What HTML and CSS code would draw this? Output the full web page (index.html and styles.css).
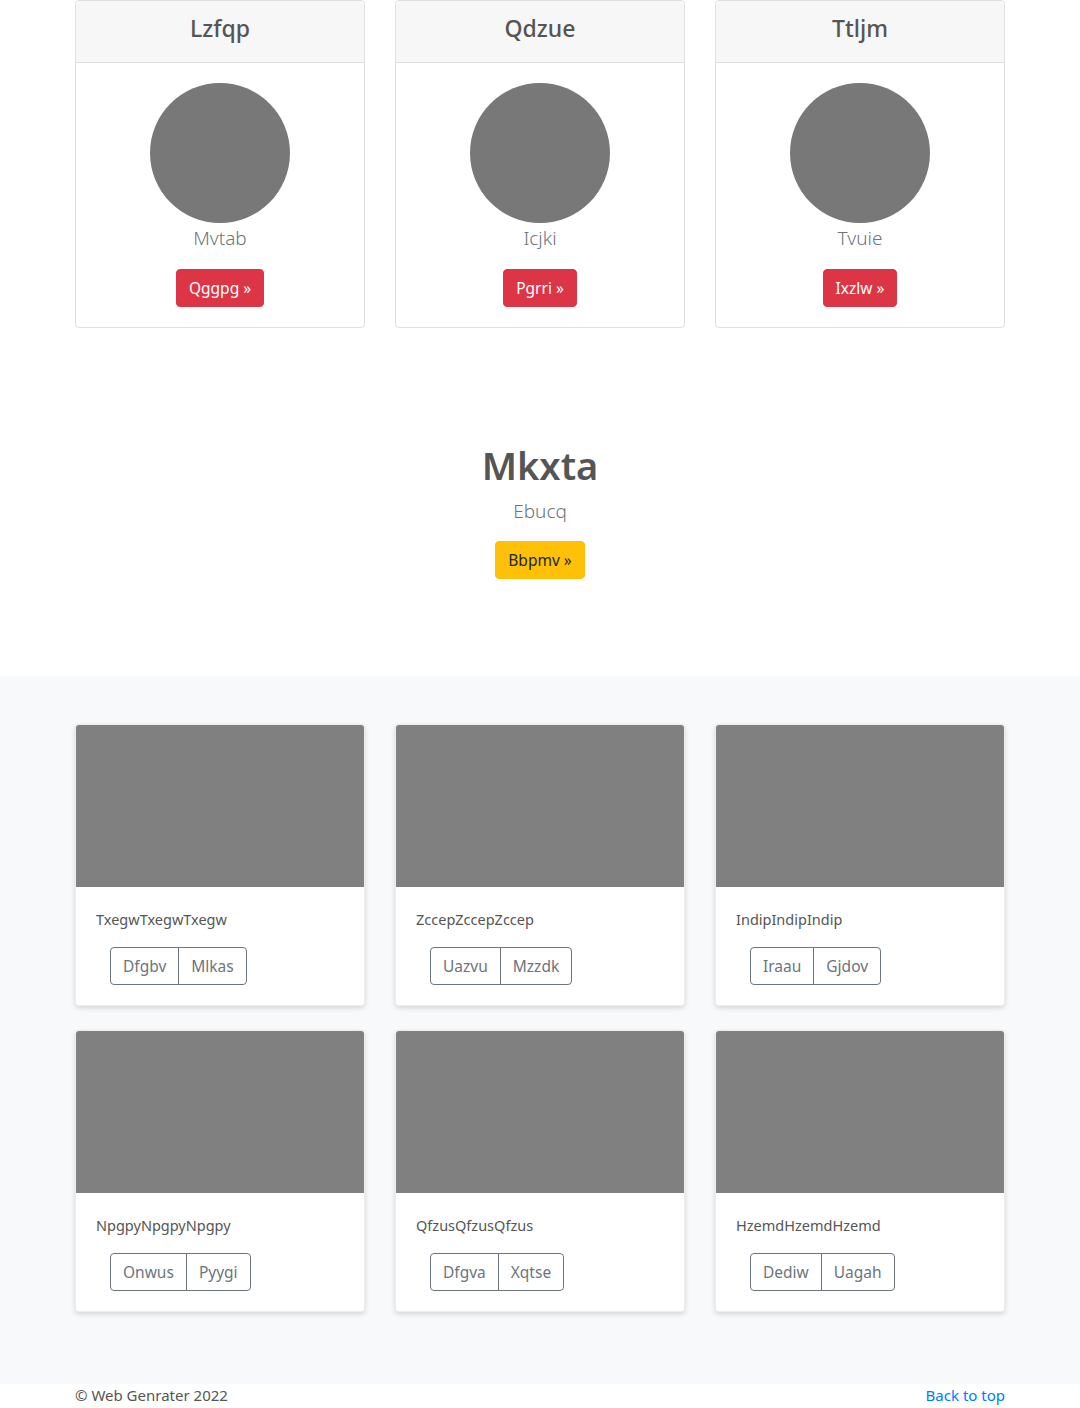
FILE: index.html
```html
<!DOCTYPE html>
<html lang="en">
<head>
<meta charset="utf-8">
<title>Page</title>
<link rel="stylesheet" href="styles.css">
</head>
<body>
<div class="container">
  <div class="pricing">
    <div class="pcard">
      <div class="pcard-header"><h4>Lzfqp</h4></div>
      <div class="pcard-body">
        <div class="avatar"></div>
        <p class="lead">Mvtab</p>
        <a class="btn btn-danger" href="#">Qggpg &raquo;</a>
      </div>
    </div>
    <div class="pcard">
      <div class="pcard-header"><h4>Qdzue</h4></div>
      <div class="pcard-body">
        <div class="avatar"></div>
        <p class="lead">Icjki</p>
        <a class="btn btn-danger" href="#">Pgrri &raquo;</a>
      </div>
    </div>
    <div class="pcard">
      <div class="pcard-header"><h4>Ttljm</h4></div>
      <div class="pcard-body">
        <div class="avatar"></div>
        <p class="lead">Tvuie</p>
        <a class="btn btn-danger" href="#">Ixzlw &raquo;</a>
      </div>
    </div>
  </div>
</div>

<section class="hero">
  <h1>Mkxta</h1>
  <p class="lead">Ebucq</p>
  <a class="btn btn-warning" href="#">Bbpmv &raquo;</a>
</section>

<section class="album">
  <div class="container">
    <div class="grid">
      <div class="card">
        <div class="thumb"></div>
        <div class="card-body">
          <p class="card-text">TxegwTxegwTxegw</p>
          <div class="btn-group"><button class="btn btn-outline">Dfgbv</button><button class="btn btn-outline">Mlkas</button></div>
        </div>
      </div>
      <div class="card">
        <div class="thumb"></div>
        <div class="card-body">
          <p class="card-text">ZccepZccepZccep</p>
          <div class="btn-group"><button class="btn btn-outline">Uazvu</button><button class="btn btn-outline">Mzzdk</button></div>
        </div>
      </div>
      <div class="card">
        <div class="thumb"></div>
        <div class="card-body">
          <p class="card-text">IndipIndipIndip</p>
          <div class="btn-group"><button class="btn btn-outline">Iraau</button><button class="btn btn-outline">Gjdov</button></div>
        </div>
      </div>
      <div class="card">
        <div class="thumb"></div>
        <div class="card-body">
          <p class="card-text">NpgpyNpgpyNpgpy</p>
          <div class="btn-group"><button class="btn btn-outline">Onwus</button><button class="btn btn-outline">Pyygi</button></div>
        </div>
      </div>
      <div class="card">
        <div class="thumb"></div>
        <div class="card-body">
          <p class="card-text">QfzusQfzusQfzus</p>
          <div class="btn-group"><button class="btn btn-outline">Dfgva</button><button class="btn btn-outline">Xqtse</button></div>
        </div>
      </div>
      <div class="card">
        <div class="thumb"></div>
        <div class="card-body">
          <p class="card-text">HzemdHzemdHzemd</p>
          <div class="btn-group"><button class="btn btn-outline">Dediw</button><button class="btn btn-outline">Uagah</button></div>
        </div>
      </div>
    </div>
  </div>
</section>

<footer class="footer">
  <div class="container footer-row">
    <p class="copy">&copy; Web Genrater 2022</p>
    <a class="top-link" href="#">Back to top</a>
  </div>
</footer>
</body>
</html>
```

FILE: styles.css
```css
* { box-sizing: border-box; }
html, body { margin: 0; padding: 0; }
body {
  font-family: "Noto Sans", "Open Sans", "Liberation Sans", sans-serif;
  font-size: 16px;
  line-height: 1.5;
  color: #555;
  background: #fff;
}
p { margin: 0; }
.container {
  width: 960px;
  margin: 0 auto;
  padding: 0 15px;
}
.pricing {
  display: grid;
  grid-template-columns: repeat(3, 290px);
  column-gap: 30px;
}
.pcard {
  border: 1px solid #dfdfdf;
  border-radius: 4px;
  text-align: center;
  background: #fff;
}
.pcard-header {
  height: 62px;
  padding-bottom: 5px;
  background: #f7f7f7;
  border-bottom: 1px solid #dfdfdf;
  display: flex;
  align-items: center;
  justify-content: center;
  border-radius: 4px 4px 0 0;
}
.pcard-header h4 {
  margin: 0;
  font-size: 23px;
  font-weight: 500;
  line-height: 1.2;
  color: #555;
}
.pcard-body {
  padding: 20px;
  display: flex;
  flex-direction: column;
  align-items: center;
}
.avatar {
  width: 140px;
  height: 140px;
  border-radius: 50%;
  background: #787878;
}
.lead {
  font-size: 19px;
  font-weight: 300;
  line-height: 30px;
  color: #6c757d;
}
.pcard-body .lead { margin-bottom: 16px; }
.btn {
  display: inline-block;
  font-family: inherit;
  font-size: 15.5px;
  line-height: 24px;
  padding: 6px 12px;
  border: 1px solid transparent;
  border-radius: 4px;
  text-decoration: none;
  cursor: pointer;
}
.btn-danger { background: #dc3545; border-color: #dc3545; color: #fff; }
.btn-warning { background: #ffc107; border-color: #ffc107; color: #212529; }

.hero {
  text-align: center;
  padding: 113px 0 97px;
  display: flex;
  flex-direction: column;
  align-items: center;
}
.hero h1 {
  margin: 0 0 7px;
  font-size: 38px;
  line-height: 48px;
  font-weight: 600;
  color: #555;
}
.hero .lead { margin-bottom: 15px; }

.album {
  background: #f8f9fa;
  padding: 48px 0 72px;
}
.grid {
  display: grid;
  grid-template-columns: repeat(3, 290px);
  column-gap: 30px;
  row-gap: 24px;
}
.card {
  background: #fff;
  border: 1px solid rgba(0,0,0,.07);
  border-radius: 4px;
  overflow: hidden;
  box-shadow: 0 2px 5px rgba(0,0,0,.15);
}
.thumb {
  height: 162px;
  background: #808080;
}
.card-body {
  padding: 20px;
}
.card-text { margin-bottom: 16px; color: #555; font-size: 14.5px; line-height: 24px; }
.btn-group {
  display: inline-flex;
  margin-left: 14px;
}
.btn-outline {
  background: transparent;
  color: #6c757d;
  border-color: #6c757d;
}
.btn-group .btn:first-child { border-radius: 4px 0 0 4px; }
.btn-group .btn:last-child { border-radius: 0 4px 4px 0; margin-left: -1px; }

.footer { background: #fff; }
.footer-row {
  display: flex;
  justify-content: space-between;
  align-items: center;
  font-size: 15px;
}
.copy { color: #555; }
.top-link { color: #007bff; text-decoration: none; }
```
